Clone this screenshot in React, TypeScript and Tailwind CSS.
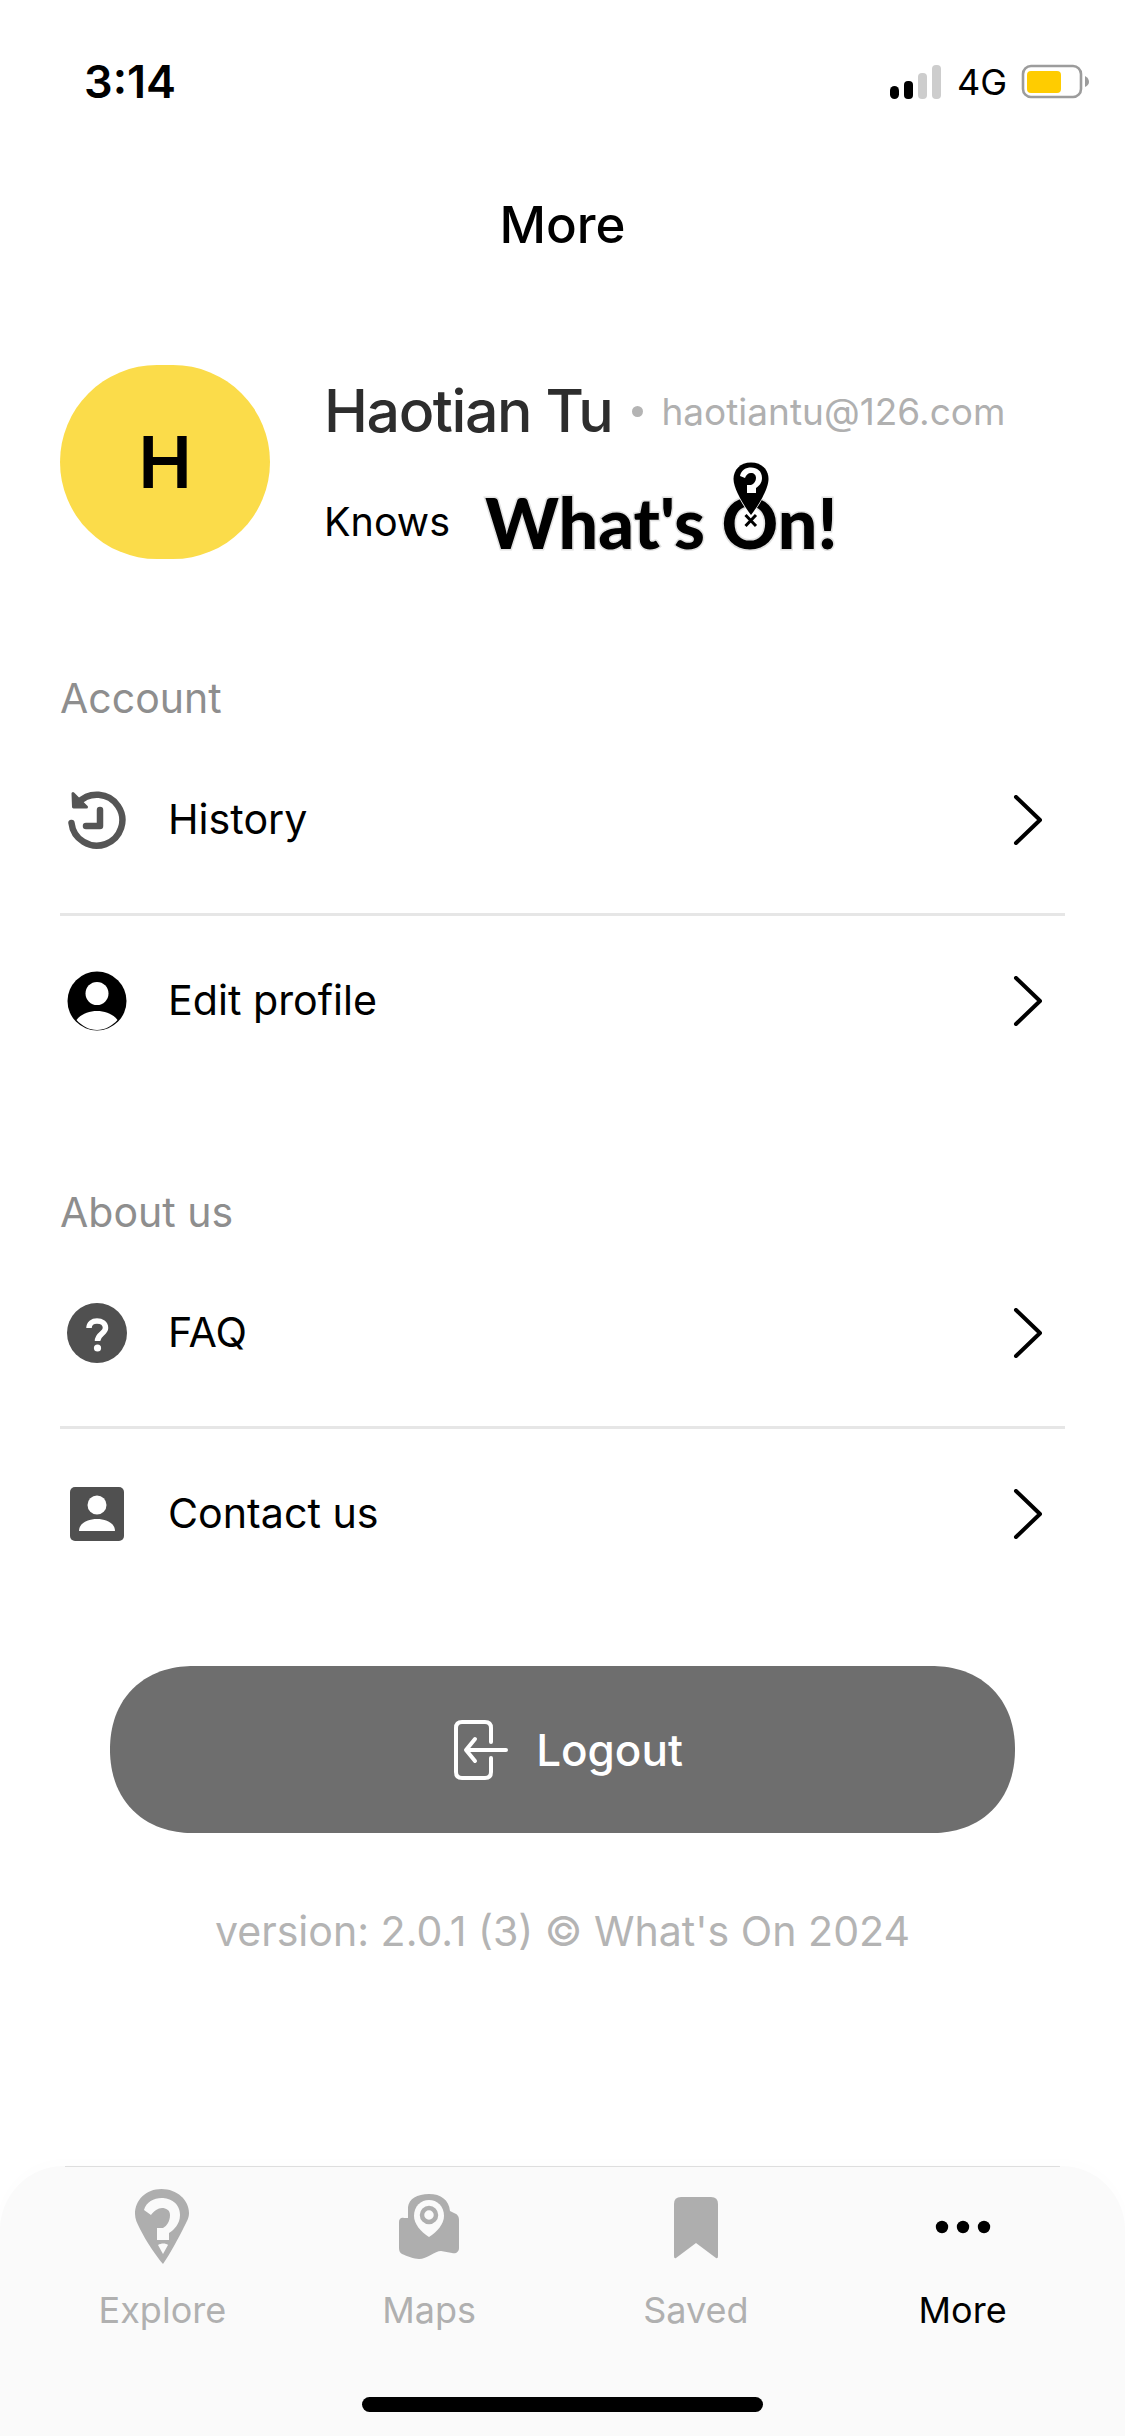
import React from "react";

const Chevron = () => (
  <svg width="30" height="50" viewBox="0 0 30 50" fill="none" className="shrink-0">
    <path d="M3 2 L27 25 L3 48" stroke="#000" strokeWidth="4" strokeLinecap="round" strokeLinejoin="round" />
  </svg>
);

const HistoryIcon = () => (
  <svg width="60" height="60" viewBox="0 0 60 60" fill="none">
    <path d="M4.5 33 A 25.5 25.5 0 1 0 11 13" stroke="#555" strokeWidth="6.5" strokeLinecap="round" />
    <path d="M6 3.5 L6.5 17 L19.5 17 Z" fill="#555" stroke="#555" strokeWidth="3" strokeLinejoin="round" />
    <path d="M33 20 V36 H19" stroke="#555" strokeWidth="6.5" strokeLinecap="round" strokeLinejoin="round" />
  </svg>
);

const ProfileIcon = () => (
  <svg width="60" height="60" viewBox="0 0 60 60">
    <circle cx="30" cy="30" r="29.5" fill="#000" />
    <circle cx="30" cy="22.5" r="11.5" fill="#fff" />
    <path d="M9.5 49 C14 43 22 40 30 40 C38 40 46 43 50.5 49 C45 55 38 59 30 59 C22 59 15 55 9.5 49 Z" fill="#fff" />
  </svg>
);

const FaqIcon = () => (
  <svg width="60" height="60" viewBox="0 0 60 60" fill="none">
    <circle cx="30" cy="30" r="30" fill="#505050" />
    <path d="M22 25 C22 20.5 25.5 18 30 18 C34.5 18 38.5 20.5 38.5 25 C38.5 30.5 30.5 31 30.5 38" stroke="#fff" strokeWidth="5.5" />
    <circle cx="30.5" cy="45" r="3.6" fill="#fff" />
  </svg>
);

const ContactIcon = () => (
  <svg width="60" height="60" viewBox="0 0 60 60">
    <rect x="3" y="3" width="54" height="54" rx="5" fill="#505050" />
    <circle cx="30" cy="21" r="9.5" fill="#fff" />
    <path d="M12 47 C12 39 21 35 30 35 C39 35 48 39 48 47 Z" fill="#fff" />
  </svg>
);

const LogoutIcon = () => (
  <svg width="54" height="60" viewBox="0 0 54 60" fill="none">
    <path d="M37 22 V8 Q37 2 31 2 H8 Q2 2 2 8 V52 Q2 58 8 58 H31 Q37 58 37 52 V38" stroke="#fff" strokeWidth="4" strokeLinecap="round" />
    <path d="M52 30 H13 M21 19 L12 30 L21 41" stroke="#fff" strokeWidth="4" strokeLinecap="round" strokeLinejoin="round" />
  </svg>
);

const ExploreIcon = () => (
  <svg width="56" height="78" viewBox="0 0 56 78">
    <path d="M27.5 1 C12 1 1 12 1 26 C1 31 3 35 6 41 C12 53 22 68 29 76 C36 66 44 51 50 39 C53 33 55 30 55 25 C55 12 43 1 27.5 1 Z" fill="#aeaeae" />
    <path d="M10 22 C12 14 20 10 27.5 10 C36 10 46 15 46 27 C46 36 40 42 35 45 V52 H23 V40 H29 C33 38 36 33 36 27 C36 22 32 20 28 20 C24 20 20 23 17 27 Z" fill="#fafafa" />
    <path d="M24 57 C27 55 32 55 34 57 L29 66 Z" fill="#fafafa" />
  </svg>
);

const MapsIcon = () => (
  <svg width="60" height="66" viewBox="0 0 60 66">
    <path d="M9 13 C10 5 18 0 30 0 C42 0 50 6 51 17 L55 19 C58 20 60 22 60 26 V54 C60 58 57 60 53 59 L42 57 C36 57 28 65 20 65 C15 65 8 62 3 60 C1 59 0 57 0 54 V28 C0 25 2 23 5 24 L9 24 Z" fill="#aeaeae" />
    <path d="M30 6 C38 6 45 12 45 22 C45 30 38 38 30 43 C22 38 15 30 15 22 C15 12 22 6 30 6 Z" fill="#fafafa" />
    <circle cx="30" cy="21" r="7" fill="none" stroke="#aeaeae" strokeWidth="4.5" />
  </svg>
);

const SavedIcon = () => (
  <svg width="46" height="63" viewBox="0 0 46 63">
    <path d="M1 8 Q1 1 8 1 H38 Q45 1 45 8 V60 Q45 63 43 62 L23 47 L3 62 Q1 63 1 60 Z" fill="#aeaeae" />
  </svg>
);

const DotsIcon = () => (
  <svg width="56" height="14" viewBox="0 0 56 14">
    <circle cx="7" cy="7" r="6.2" fill="#000" />
    <circle cx="28" cy="7" r="6.2" fill="#000" />
    <circle cx="49" cy="7" r="6.2" fill="#000" />
  </svg>
);

const Signal = () => (
  <svg width="51" height="34" viewBox="0 0 51 34" className="mr-[2px]">
    <rect x="0" y="21" width="9" height="13" rx="4.5" fill="#000" />
    <rect x="14" y="16" width="9" height="18" rx="4" fill="#000" />
    <rect x="28" y="8" width="9" height="26" rx="4" fill="#cdcdcd" />
    <rect x="42" y="0" width="9" height="34" rx="4" fill="#cdcdcd" />
  </svg>
);

const Battery = () => (
  <svg width="70" height="36" viewBox="0 0 70 36">
    <rect x="2" y="2" width="58" height="31" rx="8" fill="none" stroke="#9c9c9c" strokeWidth="2.6" />
    <rect x="6" y="7" width="34" height="22" rx="4" fill="#ffcc00" />
    <path d="M64 12 Q68 14 68 18 Q68 21 64 23 Z" fill="#9c9c9c" />
  </svg>
);

type RowProps = { icon: React.ReactNode; label: string; h: string };

const Row = ({ icon, label, h }: RowProps) => (
  <div className={`flex items-center pr-[22px] ${h}`}>
    <div className="flex w-[73px] justify-center">{icon}</div>
    <span className="ml-[35px] flex-1 text-[41.2px] leading-none text-black">{label}</span>
    <Chevron />
  </div>
);

const Tab = ({ icon, label, active }: { icon: React.ReactNode; label: string; active?: boolean }) => (
  <div className="flex flex-col items-center">
    <div className="flex h-[92px] w-full items-center justify-center">{icon}</div>
    <span className={`mt-[15px] text-[36px] leading-[44px] ${active ? "text-black" : "text-[#b0b0b0]"}`}>{label}</span>
  </div>
);

export default function App() {
  return (
    <div className="flex h-[2436px] w-[1125px] flex-col overflow-hidden bg-white font-['Inter',sans-serif]">
      <div className="flex items-center justify-between pl-[84px] pr-[34px] pt-[54px]">
        <span className="text-[45px] font-semibold leading-[56px] text-black">3:14</span>
        <div className="flex items-center gap-[14px]">
          <Signal />
          <span className="text-[36px] leading-none text-black">4G</span>
          <Battery />
        </div>
      </div>

      <h1 className="mt-[84px] text-center text-[51px] font-medium leading-[62px] text-black">More</h1>

      <div className="mt-[109px] flex items-start px-[60px]">
        <div className="flex h-[194px] w-[210px] items-center justify-center rounded-[100px] bg-[#fbdc4a] text-[72px] font-semibold leading-none text-black">
          H
        </div>
        <div className="ml-[54px] mt-[10px] flex flex-col">
          <div className="flex items-center">
            <span className="text-[59px] font-medium leading-[72px] tracking-[-1.4px] text-[#2d2d2d]">Haotian Tu</span>
            <span className="ml-[20px] h-[11px] w-[11px] rounded-full bg-[#b4b4b4]" />
            <span className="ml-[18px] text-[37px] font-normal leading-none text-[#b0b0b0]">haotiantu@126.com</span>
          </div>
          <div className="mt-[45px] flex items-center">
            <span className="text-[39.5px] leading-[60px] text-black">Knows</span>
            <span className="relative ml-[35px] font-['Lato',sans-serif] text-[70px] font-black leading-[60px] text-black [-webkit-text-stroke:3px_#e2e2e2] [paint-order:stroke_fill]">
              What's On!
              <svg width="38" height="70" viewBox="0 0 38 70" className="absolute left-[247px] top-[-31px]">
                <path d="M19 1.5 C8 1.5 1.5 9 1.5 18 C1.5 28 12 45 19 54 C26 45 36.5 28 36.5 18 C36.5 9 30 1.5 19 1.5 Z" fill="#000" stroke="#fff" strokeWidth="1.5" />
                <path d="M8 15 C9 9 14 6.5 19 6.5 C25 6.5 30 10 30 17 C30 22 27 25 24 27 V32 H15 V24 H19 C22 23 24 20 24 17 C24 14 22 12 19 12 C16 12 14 14 13 17 Z" fill="#fff" />
                <path d="M13.5 54 L24 65 M24 54 L13.5 65" stroke="#000" strokeWidth="3" />
              </svg>
            </span>
          </div>
        </div>
      </div>

      <section className="mt-[111px] px-[60px]">
        <div className="text-[41px] leading-[56px] text-[#8e8e8e]">Account</div>
        <Row icon={<HistoryIcon />} label="History" h="h-[187px]" />
        <div className="h-[3px] bg-[#e6e6e6]" />
        <Row icon={<ProfileIcon />} label="Edit profile" h="h-[169px]" />
      </section>

      <section className="mt-[99px] px-[60px]">
        <div className="text-[41px] leading-[56px] text-[#8e8e8e]">About us</div>
        <Row icon={<FaqIcon />} label="FAQ" h="h-[186px]" />
        <div className="h-[3px] bg-[#e6e6e6]" />
        <Row icon={<ContactIcon />} label="Contact us" h="h-[169px]" />
      </section>

      <div className="mx-[110px] mt-[68px] flex h-[167px] items-center justify-center gap-[28px] rounded-[84px] bg-[#6e6e6e] pl-[12px] [corner-shape:superellipse(1.12)]">
        <LogoutIcon />
        <span className="text-[44px] font-medium leading-none text-white">Logout</span>
      </div>

      <p className="mt-[72px] text-center text-[41.1px] leading-[52px] text-[#b4b4b4]">version: 2.0.1 (3) © What's On 2024</p>

      <nav className="relative mt-auto h-[270px] rounded-t-[64px] bg-[#fafafa] shadow-[0_-4px_16px_rgba(0,0,0,0.01)]">
        <div className="mx-[65px] h-[1px] bg-[#dedede]" />
        <div className="grid grid-cols-4 px-[29px] pt-[14px]">
          <Tab icon={<ExploreIcon />} label="Explore" />
          <Tab icon={<MapsIcon />} label="Maps" />
          <Tab icon={<SavedIcon />} label="Saved" />
          <Tab icon={<DotsIcon />} label="More" active />
        </div>
        <div className="absolute bottom-[24px] left-[362px] h-[15px] w-[401px] rounded-full bg-black" />
      </nav>
    </div>
  );
}
